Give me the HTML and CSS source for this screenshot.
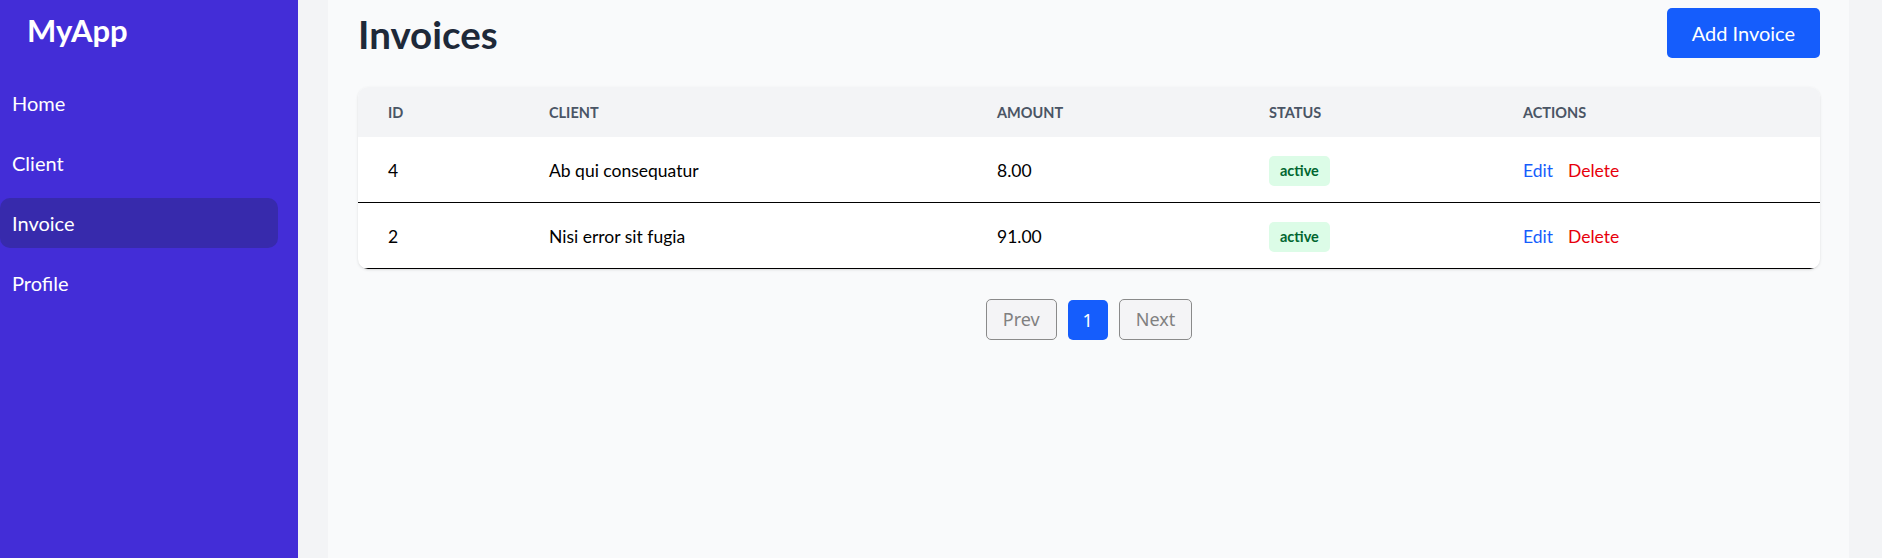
FILE: index.html
```html
<!DOCTYPE html>
<html lang="en">
<head>
<meta charset="utf-8">
<title>Invoices - MyApp</title>
<link rel="stylesheet" href="styles.css">
</head>
<body>
<div class="layout">
  <aside class="sidebar">
    <div class="logo">MyApp</div>
    <nav class="nav">
      <a class="nav-item" href="#">Home</a>
      <a class="nav-item" href="#">Client</a>
      <a class="nav-item active" href="#">Invoice</a>
      <a class="nav-item" href="#">Profile</a>
    </nav>
  </aside>
  <div class="content-wrap">
    <main class="main">
      <div class="page-header">
        <h1 class="title">Invoices</h1>
        <button class="btn-primary">Add Invoice</button>
      </div>
      <div class="table-card">
        <table class="table">
          <colgroup>
            <col class="c-id"><col class="c-client"><col class="c-amount"><col class="c-status"><col class="c-actions">
          </colgroup>
          <thead>
            <tr><th>ID</th><th>Client</th><th>Amount</th><th>Status</th><th>Actions</th></tr>
          </thead>
          <tbody>
            <tr>
              <td>4</td><td>Ab qui consequatur</td><td>8.00</td>
              <td><span class="badge">active</span></td>
              <td><a class="link-edit" href="#">Edit</a><a class="link-delete" href="#">Delete</a></td>
            </tr>
            <tr>
              <td>2</td><td>Nisi error sit fugia</td><td>91.00</td>
              <td><span class="badge">active</span></td>
              <td><a class="link-edit" href="#">Edit</a><a class="link-delete" href="#">Delete</a></td>
            </tr>
          </tbody>
        </table>
      </div>
      <div class="pagination">
        <button class="page-btn">Prev</button>
        <button class="page-btn current">1</button>
        <button class="page-btn">Next</button>
      </div>
    </main>
  </div>
</div>
</body>
</html>
```
FILE: styles.css
```css
* { box-sizing: border-box; }
html, body { margin: 0; padding: 0; }
body {
  font-family: "Lato", "Liberation Sans", sans-serif;
  color: #000;
  background: #f3f4f6;
}
.layout {
  display: flex;
  min-height: 100vh;
}
.sidebar {
  width: 298px;
  flex: none;
  background: #432dd7;
  color: #fff;
  padding: 10px 20px 0 0;
}
.logo {
  font-size: 31px;
  font-weight: 700;
  line-height: 40px;
  padding-left: 27px;
  margin-bottom: 28px;
}
.nav {
  display: flex;
  flex-direction: column;
  gap: 10px;
}
.nav-item {
  display: block;
  color: #fff;
  text-decoration: none;
  font-size: 20px;
  line-height: 25px;
  padding: 12.5px 12px;
  border-radius: 10px;
}
.nav-item.active { background: #372aac; }

.content-wrap {
  flex: 1;
  display: flex;
  padding: 0 33px 0 30px;
}
.main {
  flex: 1;
  background: #f9fafb;
  padding: 8px 29px 0 30px;
}
.page-header {
  display: flex;
  justify-content: space-between;
  align-items: flex-start;
  margin-bottom: 29px;
}
.title {
  margin: 0;
  font-size: 38.5px;
  font-weight: 700;
  line-height: 48px;
  padding-top: 2px;
  color: #1e2939;
}
.btn-primary {
  font-family: inherit;
  font-size: 20px;
  line-height: 25px;
  padding: 12.5px 25px;
  background: #155dfc;
  color: #fff;
  border: 0;
  border-radius: 5px;
  cursor: pointer;
}
.table-card {
  background: #fff;
  border-radius: 10px;
  overflow: hidden;
  box-shadow: 0 1px 3px rgba(0,0,0,0.1), 0 1px 2px -1px rgba(0,0,0,0.1);
}
.table {
  width: 100%;
  border-collapse: separate;
  border-spacing: 0;
  table-layout: fixed;
}
.c-id { width: 161px; }
.c-client { width: 448px; }
.c-amount { width: 272px; }
.c-status { width: 254px; }
.c-actions { width: auto; }
.table th {
  background: #f3f4f6;
  text-align: left;
  text-transform: uppercase;
  font-size: 14.5px;
  font-weight: 700;
  color: #4a5565;
  height: 50px;
  padding: 1px 30px 0;
  line-height: 20px;
}
.table td {
  height: 66px;
  padding: 2px 30px 0;
  font-size: 17.5px;
  line-height: 25px;
  vertical-align: middle;
  border-bottom: 1px solid #000;
}
.badge {
  display: inline-block;
  vertical-align: middle;
  background: #dcfce7;
  color: #016630;
  font-size: 14.5px;
  font-weight: 700;
  line-height: 30px;
  padding: 0 11px;
  border-radius: 5px;
}
.link-edit {
  color: #155dfc;
  text-decoration: none;
  margin-right: 15px;
}
.link-delete {
  color: #e7000b;
  text-decoration: none;
}
.pagination {
  display: flex;
  justify-content: center;
  align-items: center;
  gap: 11px;
  margin-top: 30px;
}
.page-btn {
  font-family: "Noto Sans", "Open Sans", sans-serif;
  font-size: 18px;
  height: 41px;
  padding: 0 16px;
  line-height: 39px;
  border: 1px solid #8a8a8a;
  border-radius: 5px;
  background: #f4f4f6;
  color: #808080;
}
.page-btn.current {
  height: 40px;
  width: 40px;
  padding: 0;
  line-height: 40px;
  border: 0;
  background: #155dfc;
  color: #fff;
}
```
